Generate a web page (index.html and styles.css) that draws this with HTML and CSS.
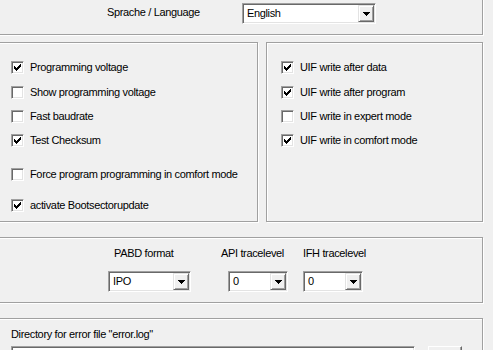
FILE: index.html
```html
<!DOCTYPE html>
<html lang="en">
<head>
    <meta charset="UTF-8">
    <title>Settings</title>
    <link rel="stylesheet" href="styles.css">
</head>
<body>
    <div class="dialog">
        <div class="group lang">
            <span class="lang-label">Sprache / Language</span>
            <div class="combo combo-lang">
                <span class="combo-text">English</span>
                <span class="combo-btn"><svg width="7" height="4" viewBox="0 0 7 4" shape-rendering="crispEdges"><path d="M0 0h7v1h-7z M1 1h5v1h-5z M2 2h3v1h-3z M3 3h1v1h-1z" fill="#000"/></svg></span>
            </div>
        </div>

        <div class="options">
            <div class="group opts-left">
                <label class="check"><span class="box"><svg width="7" height="7" viewBox="0 0 7 7" shape-rendering="crispEdges"><path d="M6 0h1v1h-1z M5 1h2v1h-2z M0 2h1v1h-1z M4 2h3v1h-3z M0 3h2v1h-2z M3 3h3v1h-3z M0 4h5v1h-5z M1 5h3v1h-3z M2 6h1v1h-1z" fill="#000"/></svg></span>Programming voltage</label>
                <label class="check"><span class="box"></span>Show programming voltage</label>
                <label class="check"><span class="box"></span>Fast baudrate</label>
                <label class="check"><span class="box"><svg width="7" height="7" viewBox="0 0 7 7" shape-rendering="crispEdges"><path d="M6 0h1v1h-1z M5 1h2v1h-2z M0 2h1v1h-1z M4 2h3v1h-3z M0 3h2v1h-2z M3 3h3v1h-3z M0 4h5v1h-5z M1 5h3v1h-3z M2 6h1v1h-1z" fill="#000"/></svg></span>Test Checksum</label>
                <label class="check wide-gap"><span class="box"></span>Force program programming in comfort mode</label>
                <label class="check last-gap"><span class="box"><svg width="7" height="7" viewBox="0 0 7 7" shape-rendering="crispEdges"><path d="M6 0h1v1h-1z M5 1h2v1h-2z M0 2h1v1h-1z M4 2h3v1h-3z M0 3h2v1h-2z M3 3h3v1h-3z M0 4h5v1h-5z M1 5h3v1h-3z M2 6h1v1h-1z" fill="#000"/></svg></span>activate Bootsectorupdate</label>
            </div>
            <div class="group opts-right">
                <label class="check"><span class="box"><svg width="7" height="7" viewBox="0 0 7 7" shape-rendering="crispEdges"><path d="M6 0h1v1h-1z M5 1h2v1h-2z M0 2h1v1h-1z M4 2h3v1h-3z M0 3h2v1h-2z M3 3h3v1h-3z M0 4h5v1h-5z M1 5h3v1h-3z M2 6h1v1h-1z" fill="#000"/></svg></span>UIF write after data</label>
                <label class="check"><span class="box"><svg width="7" height="7" viewBox="0 0 7 7" shape-rendering="crispEdges"><path d="M6 0h1v1h-1z M5 1h2v1h-2z M0 2h1v1h-1z M4 2h3v1h-3z M0 3h2v1h-2z M3 3h3v1h-3z M0 4h5v1h-5z M1 5h3v1h-3z M2 6h1v1h-1z" fill="#000"/></svg></span>UIF write after program</label>
                <label class="check"><span class="box"></span>UIF write in expert mode</label>
                <label class="check"><span class="box"><svg width="7" height="7" viewBox="0 0 7 7" shape-rendering="crispEdges"><path d="M6 0h1v1h-1z M5 1h2v1h-2z M0 2h1v1h-1z M4 2h3v1h-3z M0 3h2v1h-2z M3 3h3v1h-3z M0 4h5v1h-5z M1 5h3v1h-3z M2 6h1v1h-1z" fill="#000"/></svg></span>UIF write in comfort mode</label>
            </div>
        </div>

        <div class="group levels">
            <div class="level-col col-pabd">
                <span class="level-label">PABD format</span>
                <div class="combo">
                    <span class="combo-text">IPO</span>
                    <span class="combo-btn"><svg width="7" height="4" viewBox="0 0 7 4" shape-rendering="crispEdges"><path d="M0 0h7v1h-7z M1 1h5v1h-5z M2 2h3v1h-3z M3 3h1v1h-1z" fill="#000"/></svg></span>
                </div>
            </div>
            <div class="level-col col-api">
                <span class="level-label">API tracelevel</span>
                <div class="combo">
                    <span class="combo-text">0</span>
                    <span class="combo-btn"><svg width="7" height="4" viewBox="0 0 7 4" shape-rendering="crispEdges"><path d="M0 0h7v1h-7z M1 1h5v1h-5z M2 2h3v1h-3z M3 3h1v1h-1z" fill="#000"/></svg></span>
                </div>
            </div>
            <div class="level-col col-ifh">
                <span class="level-label">IFH tracelevel</span>
                <div class="combo">
                    <span class="combo-text">0</span>
                    <span class="combo-btn"><svg width="7" height="4" viewBox="0 0 7 4" shape-rendering="crispEdges"><path d="M0 0h7v1h-7z M1 1h5v1h-5z M2 2h3v1h-3z M3 3h1v1h-1z" fill="#000"/></svg></span>
                </div>
            </div>
        </div>

        <div class="group errdir">
            <span class="errdir-label">Directory for error file "error.log"</span>
            <div class="errdir-row">
                <div class="edit"></div>
                <span class="browse-btn"></span>
            </div>
        </div>
    </div>
</body>
</html>
```

FILE: styles.css
```css
body, html {
    margin: 0;
    padding: 0;
    height: 100%;
    overflow: hidden;
    background: #f0f0f0;
}
body {
    font-family: "Liberation Sans", Arial, sans-serif;
    font-size: 11px;
    letter-spacing: -0.35px;
    color: #000;
}
.dialog {
    margin-left: -4px;
    width: 487px;
}
.group {
    box-sizing: border-box;
    border: 1px solid #a0a0a0;
    box-shadow: 1px 1px 0 #fff, inset 1px 1px 0 #fff;
}

/* language row */
.lang {
    margin-top: -12px;
    height: 47px;
    display: flex;
    align-items: flex-end;
    padding: 0 0 10px 110px;
}
.lang-label {
    width: 135px;
    line-height: 13px;
    margin-bottom: 5px;
}
.combo {
    box-sizing: border-box;
    height: 21px;
    display: flex;
    align-items: stretch;
    background: #fff;
    border: 1px solid;
    border-color: #a0a0a0 #fff #fff #a0a0a0;
    box-shadow: inset 1px 1px 0 #696969, inset -1px -1px 0 #e3e3e3;
    padding: 1px;
}
.combo-lang {
    width: 134px;
}
.combo-text {
    flex: 1;
    padding-left: 3px;
    line-height: 17px;
}
.combo-btn {
    box-sizing: border-box;
    width: 16px;
    display: flex;
    align-items: center;
    justify-content: center;
    background: #f0f0f0;
    border: 1px solid;
    border-color: #e3e3e3 #696969 #696969 #e3e3e3;
    box-shadow: inset 1px 1px 0 #fff, inset -1px -1px 0 #a0a0a0;
}

/* checkbox groups */
.options {
    display: flex;
    gap: 8px;
    margin-top: 7px;
}
.opts-left, .opts-right {
    height: 180px;
    padding: 18px 0 0 14px;
}
.opts-left {
    width: 262px;
}
.opts-right {
    width: 217px;
}
.check {
    display: flex;
    align-items: center;
    gap: 6px;
    height: 13px;
    line-height: 13px;
    white-space: nowrap;
}
.check + .check {
    margin-top: 11px;
}
.check:nth-child(2) {
    margin-top: 12px;
}
.check.wide-gap {
    margin-top: 21px;
}
.check.last-gap {
    margin-top: 18px;
}
.box {
    box-sizing: border-box;
    width: 13px;
    height: 13px;
    flex: none;
    display: flex;
    padding: 2px 0 0 2px;
    background: #fff;
    border: 1px solid;
    border-color: #a0a0a0 #fff #fff #a0a0a0;
    box-shadow: inset 1px 1px 0 #696969, inset -1px -1px 0 #e3e3e3;
}
.box svg {
    display: block;
}

/* trace levels */
.levels {
    margin-top: 15px;
    height: 66px;
    display: flex;
    padding: 9px 0 0 111px;
}
.level-col {
    display: flex;
    flex-direction: column;
}
.level-label {
    line-height: 13px;
    height: 13px;
    white-space: nowrap;
    margin-bottom: 11px;
}
.col-pabd {
    width: 83px;
}
.col-pabd .level-label {
    margin-left: 6px;
}
.col-api {
    width: 60px;
    margin-left: 37px;
}
.col-api .level-label {
    margin-left: -7px;
}
.col-ifh {
    width: 60px;
    margin-left: 15px;
}

/* error directory */
.errdir {
    margin-top: 15px;
    height: 60px;
    padding: 9px 0 0 14px;
}
.errdir-label {
    display: block;
    line-height: 13px;
    height: 13px;
}
.errdir-row {
    display: flex;
    margin-top: 5px;
    gap: 13px;
}
.edit {
    box-sizing: border-box;
    width: 404px;
    height: 21px;
    background: #fff;
    border: 1px solid;
    border-color: #a0a0a0 #fff #fff #a0a0a0;
    box-shadow: inset 1px 1px 0 #696969, inset -1px -1px 0 #e3e3e3;
}
.browse-btn {
    box-sizing: border-box;
    width: 34px;
    height: 23px;
    background: #f0f0f0;
    border: 1px solid;
    border-color: #fff #696969 #696969 #fff;
    box-shadow: inset -1px -1px 0 #a0a0a0;
}
```
